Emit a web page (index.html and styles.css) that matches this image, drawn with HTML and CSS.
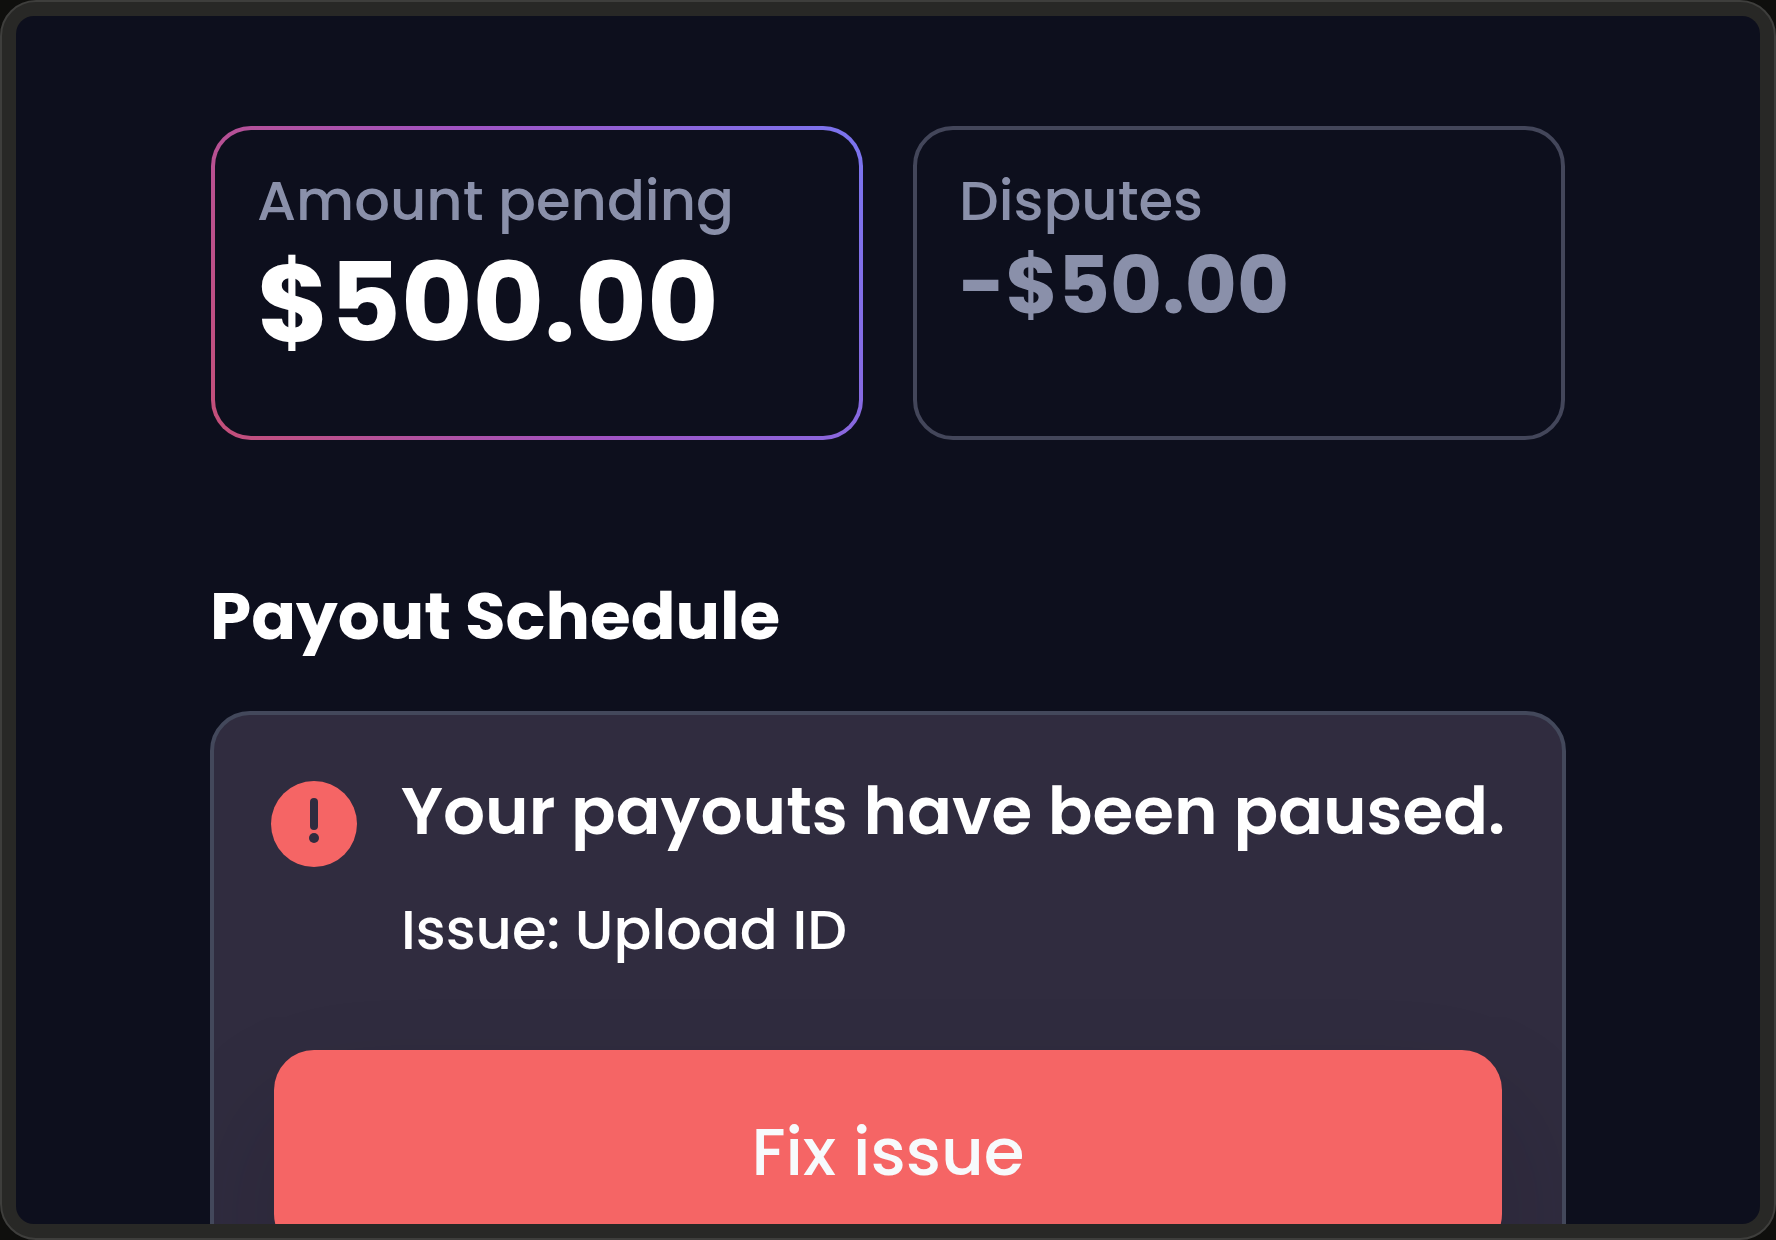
FILE: index.html
```html
<!DOCTYPE html>
<html lang="en">
<head>
  <meta charset="utf-8">
  <meta name="viewport" content="width=device-width, initial-scale=1">
  <title>Payouts</title>
  <link rel="stylesheet" href="styles.css">
</head>
<body>
  <div class="frame">
    <main class="content">
      <section class="stats" aria-label="Balances">
        <div class="card card-active">
          <p class="label">Amount pending</p>
          <p class="amount">$500.00</p>
        </div>
        <div class="card">
          <p class="label">Disputes</p>
          <p class="amount amount-muted">-$50.00</p>
        </div>
      </section>
      <h1 class="heading">Payout Schedule</h1>
      <section class="alert">
        <div class="alert-row">
          <svg class="alert-icon" viewBox="0 0 86 86" aria-hidden="true">
            <circle cx="43" cy="43" r="43" fill="#f56565"/>
            <rect x="39" y="17" width="8" height="32" rx="4" fill="#302c3f"/>
            <circle cx="43" cy="57" r="5" fill="#302c3f"/>
          </svg>
          <div>
            <h2 class="alert-title">Your payouts have been paused.</h2>
            <p class="alert-text">Issue: Upload ID</p>
          </div>
        </div>
        <button class="fix" type="button">Fix issue</button>
      </section>
    </main>
  </div>
</body>
</html>
```
FILE: styles.css
```css
* {
  box-sizing: border-box;
  margin: 0;
}

body {
  background: #0f0f0d;
  font-family: Poppins, Inter, sans-serif;
  color: #fff;
}

.frame {
  height: 100vh;
  padding: 14px;
  border: 2px solid #3e3e3c;
  border-radius: 36px;
  background: #282826;
}

.content {
  height: 100%;
  overflow: hidden;
  padding: 110px max(24px, calc(50% - 678px)) 0;
  border-radius: 18px;
  background: #0d0f1d;
}

.stats {
  display: grid;
  grid-template-columns: 1fr 1fr;
  gap: 50px;
  padding: 0 1px;
}

.card {
  min-height: 314px;
  padding: 39px 42px;
  border: 4px solid #43465a;
  border-radius: 40px;
}

.card-active {
  border-color: transparent;
  background:
    linear-gradient(#0d0f1d, #0d0f1d) padding-box,
    linear-gradient(65deg, #c44f78, #a053c4 50%, #7a75f0) border-box;
}

.label {
  font-size: 56px;
  line-height: 64px;
  font-weight: 500;
  color: #8a90aa;
}

.amount {
  font-size: 110px;
  line-height: 140px;
  font-weight: 700;
}

.amount-muted {
  font-size: 80px;
  line-height: 104px;
  color: #8a90aa;
}

.heading {
  margin: 136px 0 55px;
  font-size: 66px;
  line-height: 80px;
  font-weight: 700;
}

.alert {
  overflow: hidden;
  padding: 56px 60px;
  border: 4px solid #43485b;
  border-radius: 40px;
  background: #302c3f;
}

.alert-row {
  display: flex;
  align-items: flex-start;
  gap: 44px;
  margin: 0 -16px 88px 0;
}

.alert-icon {
  flex: none;
  width: 86px;
  height: 86px;
  margin: 10px 0 0 -3px;
}

.alert-title {
  margin-bottom: 47px;
  font-size: 66px;
  line-height: 80px;
  font-weight: 600;
}

.alert-text {
  font-size: 56px;
  line-height: 64px;
  font-weight: 500;
}

.fix {
  width: 100%;
  padding: 62px 24px;
  border: 0;
  border-radius: 40px;
  background: #f56565;
  box-shadow: 0 64px 120px rgba(20, 16, 28, 0.2);
  font: inherit;
  font-size: 66px;
  line-height: 80px;
  font-weight: 500;
  color: #f7fafc;
}
```
